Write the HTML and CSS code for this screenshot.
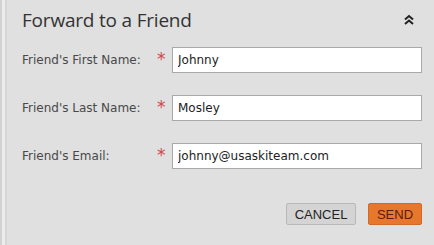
FILE: index.html
```html
<!DOCTYPE html>
<html lang="en">
<head>
  <meta charset="UTF-8">
  <meta name="viewport" content="width=device-width, initial-scale=1.0">
  <title>Forward to a Friend</title>
  <link rel="stylesheet" href="styles.css">
</head>
<body>

  <div class="forward-panel">
    <div class="panel-header">
      <h2>Forward to a Friend</h2>
      <button type="button" class="collapse-btn" aria-label="Collapse">
        <svg width="12" height="12" viewBox="0 0 12 12">
          <path d="M2 5.5 L6 2 L10 5.5 M2 10 L6 6.5 L10 10" fill="none" stroke="#222" stroke-width="2"/>
        </svg>
      </button>
    </div>

    <form id="forward-form" class="forward-form">
      <div class="form-row">
        <label for="first-name">Friend's First Name:</label>
        <span class="required">*</span>
        <input type="text" id="first-name" value="Johnny">
      </div>
      <div class="form-row">
        <label for="last-name">Friend's Last Name:</label>
        <span class="required">*</span>
        <input type="text" id="last-name" value="Mosley">
      </div>
      <div class="form-row">
        <label for="email">Friend's Email:</label>
        <span class="required">*</span>
        <input type="text" id="email" value="johnny@usaskiteam.com">
      </div>

      <div class="form-actions">
        <button type="button" class="cancel-btn">CANCEL</button>
        <button type="submit" class="send-btn">SEND</button>
      </div>
    </form>
  </div>

</body>
</html>
```

FILE: styles.css
```css
/* Reset default styles */
* {
  margin: 0;
  padding: 0;
  box-sizing: border-box;
}

body {
  font-family: "DejaVu Sans", Verdana, sans-serif;
  background: #e0e0e0;
}

/* Panel */
.forward-panel {
  height: 245px;
  background: #e0e0e0;
  border-left: 2px solid #d2d2d2;
  box-shadow: inset 3px 0 0 #ececec, inset 5px 0 0 #d6d6d6;
  padding: 0 12px 0 20px;
}

/* Header */
.panel-header {
  display: flex;
  align-items: center;
  justify-content: space-between;
  height: 40px;
}

.panel-header h2 {
  font-family: "Open Sans", sans-serif;
  font-weight: normal;
  font-size: 19px;
  color: #333;
  letter-spacing: -0.2px;
}

.collapse-btn {
  width: 20px;
  height: 20px;
  margin-right: 3px;
  display: flex;
  align-items: center;
  justify-content: center;
  background: none;
  border: none;
  cursor: pointer;
}

/* Form rows */
.forward-form {
  padding-top: 7px;
}

.form-row {
  display: grid;
  grid-template-columns: 135px 15px 250px;
  align-items: center;
  height: 26px;
  margin-bottom: 22px;
}

.form-row label {
  font-size: 12px;
  color: #484848;
}

.required {
  color: #d0454a;
  font-size: 17px;
  line-height: 1;
  align-self: start;
  margin-top: 4px;
}

.form-row input {
  height: 26px;
  padding: 0 5px;
  font-family: "DejaVu Sans", Verdana, sans-serif;
  font-size: 12px;
  color: #222;
  background: #fff;
  border: 1px solid #a9a9a9;
  outline: none;
}

/* Buttons */
.form-actions {
  display: flex;
  justify-content: flex-end;
  gap: 12px;
  margin-top: 34px;
}

.cancel-btn,
.send-btn {
  height: 22px;
  font-family: "Liberation Sans", Arial, sans-serif;
  font-size: 13px;
  border-radius: 2px;
  cursor: pointer;
}

.cancel-btn {
  width: 70px;
  color: #222;
  background: #d4d4d4;
  border: 1px solid #b8b8b8;
}

.send-btn {
  width: 54px;
  color: #5a1c0c;
  background: #e8772e;
  border: 1px solid #d06a28;
}

.send-btn:hover {
  background: #f08a44;
}
```
